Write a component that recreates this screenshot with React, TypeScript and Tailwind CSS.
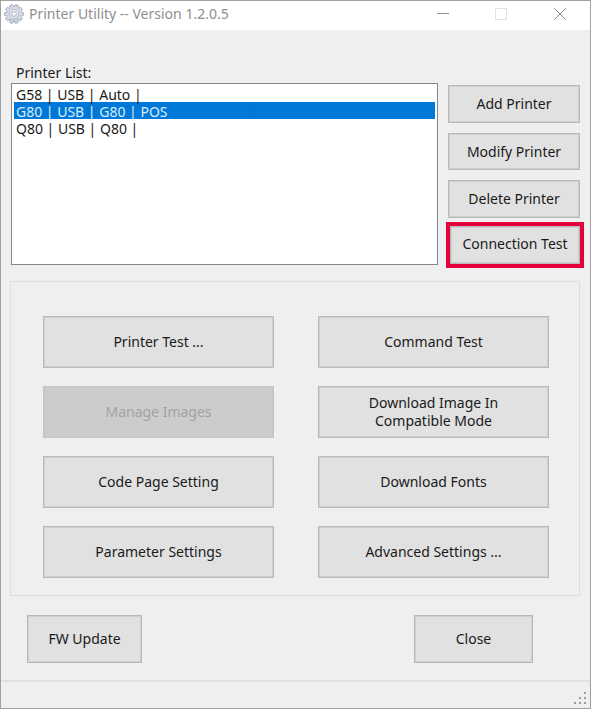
import { useState, type ReactNode } from "react";
import clsx from "clsx";

const printers = ["G58 | USB | Auto |", "G80 | USB | G80 | POS", "Q80 | USB | Q80 |"];

const actions: { label: ReactNode; name: string; disabled?: boolean }[] = [
  { name: "printer-test", label: "Printer Test ..." },
  { name: "command-test", label: "Command Test" },
  { name: "manage-images", label: "Manage Images", disabled: true },
  {
    name: "download-image",
    label: (
      <>
        Download Image In
        <br />
        Compatible Mode
      </>
    ),
  },
  { name: "code-page", label: "Code Page Setting" },
  { name: "download-fonts", label: "Download Fonts" },
  { name: "parameters", label: "Parameter Settings" },
  { name: "advanced", label: "Advanced Settings ..." },
];

function PushButton({
  children,
  className,
  disabled,
}: {
  children: ReactNode;
  className?: string;
  disabled?: boolean;
}) {
  return (
    <button
      type="button"
      disabled={disabled}
      className={clsx(
        "flex items-center justify-center border text-center ring-1 ring-inset",
        disabled
          ? "border-[#c3c3c3] bg-[#cccccc] text-[#a3a3a3] ring-[#c8c8c8]"
          : "border-[#b8b8b8] bg-[#e1e1e1] text-[#1a1a1a] ring-[#d0d0d0]",
        className,
      )}
    >
      {children}
    </button>
  );
}

function GearIcon() {
  return (
    <svg viewBox="0 0 20 20" className="size-5" aria-hidden="true">
      <g fill="#d5dce6" stroke="#9a9fae" strokeWidth="0.8">
        {[0, 36, 72, 108, 144, 180, 216, 252, 288, 324].map((angle) => (
          <path
            key={angle}
            d="M8 4 L8.5 0.8 Q10 0.1 11.5 0.8 L12 4"
            transform={`rotate(${angle + 18} 10 10)`}
          />
        ))}
      </g>
      <circle cx="10" cy="10" r="7" fill="#d9dfe8" />
      <circle cx="10" cy="10" r="4.8" fill="#e6e9ef" stroke="#b4b8c5" strokeWidth="1" />
      <circle cx="10" cy="10" r="2.6" fill="#d9dde4" stroke="#b6bac5" strokeWidth="0.8" />
      <circle cx="10" cy="10" r="1.3" fill="#ffffff" />
      <path d="M14.8 14.5 A6.4 6.4 0 0 1 6 15" fill="none" stroke="#a9c9dc" strokeWidth="1.2" />
    </svg>
  );
}

function TitleBar() {
  return (
    <header className="flex h-[29px] items-center bg-white pb-[3px] pl-[3px]">
      <GearIcon />
      <h1 className="ml-[5px] flex-1 text-[14px] text-[#8f8f8f]">
        Printer Utility -- Version 1.2.0.5
      </h1>
      <button type="button" aria-label="Minimize" className="flex w-[58px] justify-center">
        <svg viewBox="0 0 12 12" className="size-3" shapeRendering="crispEdges">
          <path d="M0 5.5H12" stroke="#8f8f8f" />
        </svg>
      </button>
      <button
        type="button"
        aria-label="Maximize"
        disabled
        className="flex w-[58px] justify-center"
      >
        <svg viewBox="0 0 12 12" className="size-3" fill="none">
          <path d="M.5 .5H11.5V11.5H.5Z" stroke="#e3e3e3" />
        </svg>
      </button>
      <button type="button" aria-label="Close window" className="flex w-[60px] justify-center">
        <svg viewBox="0 0 12 12" className="size-3" fill="none">
          <path d="M.3 .3L11.7 11.7M11.7 .3L.3 11.7" stroke="#8a8a8a" />
        </svg>
      </button>
    </header>
  );
}

export default function App() {
  const [selected, setSelected] = useState(printers[1]);

  return (
    <div className="flex min-h-screen flex-col border border-[#a0a0a0] bg-[#efefef] font-['Noto_Sans','Open_Sans',sans-serif] text-[14px] leading-[18px] text-[#1a1a1a]">
      <TitleBar />

      <main className="flex flex-1 flex-col px-[10px] pt-[33px]">
        <section className="flex">
          <div className="flex flex-1 flex-col">
            <label htmlFor="printers" className="pt-px pl-[5px]">
              Printer List:
            </label>
            <select
              id="printers"
              size={10}
              value={selected}
              onChange={(event) => setSelected(event.target.value)}
              className="mt-px h-[182px] w-full overflow-hidden border border-[#828790] bg-white px-[2px] py-px outline-none"
            >
              {printers.map((printer) => (
                <option
                  key={printer}
                  value={printer}
                  className="h-[17px] min-h-0 px-[2px] py-0 leading-[17px] checked:bg-linear-to-r checked:from-[#0078d7] checked:to-[#0078d7] checked:[-webkit-text-fill-color:#d9ecfa]"
                >
                  {printer}
                </option>
              ))}
            </select>
          </div>

          <div className="mr-[-4px] ml-2 flex w-[138px] flex-col pt-[22px]">
            <div className="flex flex-col gap-[10px] pr-1 pl-[2px]">
              <PushButton className="h-[38px]">Add Printer</PushButton>
              <PushButton className="h-[37px]">Modify Printer</PushButton>
              <PushButton className="h-[38px]">Delete Printer</PushButton>
            </div>
            <div className="mt-1 border-4 border-[#e4003a]">
              <PushButton className="h-[38px] w-full pb-[2px]">Connection Test</PushButton>
            </div>
          </div>
        </section>

        <section
          aria-label="Printer actions"
          className="mt-[13px] ml-[-1px] grid grid-cols-2 gap-x-[44px] gap-y-[18px] border border-[#dedede] pt-[34px] pr-[30px] pb-[17px] pl-8"
        >
          {actions.map((action) => (
            <PushButton key={action.name} disabled={action.disabled} className="h-[52px]">
              {action.label}
            </PushButton>
          ))}
        </section>

        <div className="mt-[19px] flex justify-between pr-[47px] pl-4">
          <PushButton className="h-12 w-[115px]">FW Update</PushButton>
          <PushButton className="h-12 w-[119px]">Close</PushButton>
        </div>
      </main>

      <footer className="flex h-7 items-end justify-end border-t-2 border-[#e0e0e0] pr-[3px] pb-[3px]">
        <svg viewBox="0 0 14 14" className="size-[14px]" fill="#9c9c9c" aria-hidden="true">
          <path d="M11 1h2v2h-2zM6 6h2v2h-2zM11 6h2v2h-2zM1 11h2v2h-2zM6 11h2v2h-2zM11 11h2v2h-2z" />
        </svg>
      </footer>
    </div>
  );
}
